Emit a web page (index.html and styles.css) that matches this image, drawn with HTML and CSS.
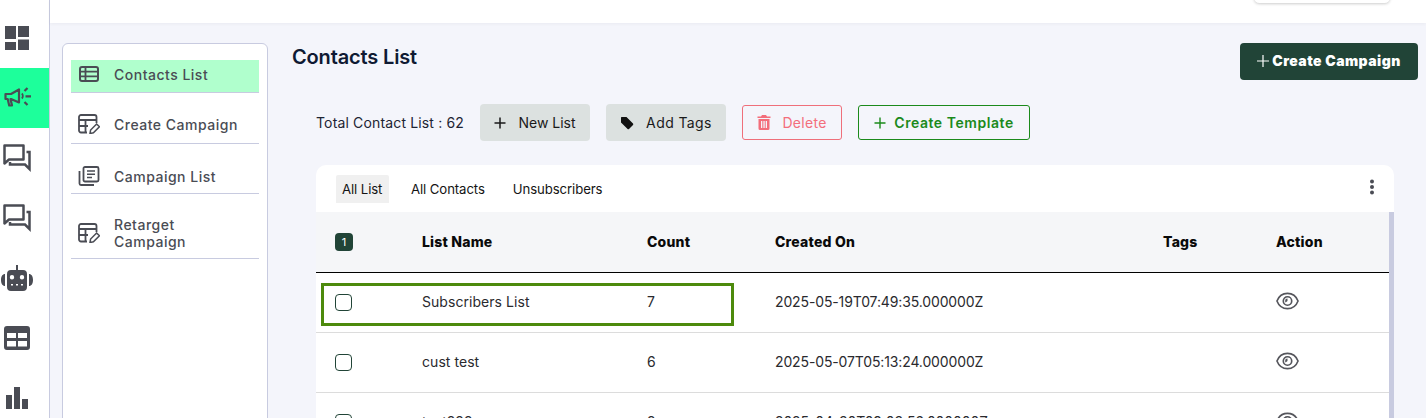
FILE: index.html
```html
<!DOCTYPE html>
<html lang="en">
<head>
<meta charset="utf-8">
<title>Contacts List</title>
<link rel="stylesheet" href="styles.css">
</head>
<body>
<div class="app">
  <nav class="rail">
    <a class="rail-item"><svg width="24" height="24" viewBox="0 0 24 24"><path d="M0 0h11v13H0zM13 0h11v11H13zM0 16h11v8H0zM13 13.500h11V24H13z"/></svg></a>
    <a class="rail-item is-active"><svg width="27" height="22" viewBox="0 0 27 22"><path d="M1.500 7h5.500l8-4.500v13L7 12H6.500l1.500 6.500H5.200L3.700 12H1.500z" stroke="currentColor" stroke-width="2.200" stroke-linejoin="round" fill="none"/><path d="M17.800 6.500a3.500 3.500 0 0 1 0 5" fill="none" stroke="currentColor" stroke-width="1.800"/><path d="M20.500 4l3-3M21.500 9.300h5.500M20.500 15l3 3" fill="none" stroke="currentColor" stroke-width="2.200"/></svg></a>
    <a class="rail-item"><svg width="28" height="28" viewBox="0 0 28 28"><path d="M1.500 1.500h19v14H6l-4.500 4z" fill="none" stroke="currentColor" stroke-width="2.500" stroke-linejoin="round"/><path d="M23.500 8h3v17L22 20.500H7v-2.500" fill="none" stroke="currentColor" stroke-width="2.500"/></svg></a>
    <a class="rail-item"><svg width="28" height="28" viewBox="0 0 28 28"><path d="M1.500 1.500h19v14H6l-4.500 4z" fill="none" stroke="currentColor" stroke-width="2.500" stroke-linejoin="round"/><path d="M23.500 8h3v17L22 20.500H7v-2.500" fill="none" stroke="currentColor" stroke-width="2.500"/></svg></a>
    <a class="rail-item"><svg width="34" height="26" viewBox="0 0 34 26"><path d="M16 0h2v5h-2z"/><path fill-rule="evenodd" d="M11 5h12a4 4 0 0 1 4 4v13a4 4 0 0 1-4 4H11a4 4 0 0 1-4-4V9a4 4 0 0 1 4-4zm1 5a2.200 2.200 0 1 0 0 4.400 2.200 2.200 0 0 0 0-4.400zm10 0a2.200 2.200 0 1 0 0 4.400 2.200 2.200 0 0 0 0-4.400zM11 19v1.500h2V19zm5 0v1.500h2V19zm5 0v1.500h2V19z"/><path d="M5 9v12c-2.500 0-4-2.200-4-6S2.500 9 5 9zM29 9v12c2.500 0 4-2.200 4-6S31.500 9 29 9z"/></svg></a>
    <a class="rail-item"><svg width="26" height="24" viewBox="0 0 26 24"><path fill-rule="evenodd" d="M3 0h20a3 3 0 0 1 3 3v18a3 3 0 0 1-3 3H3a3 3 0 0 1-3-3V3a3 3 0 0 1 3-3zm0 7v5h9V7zm11 0v5h9V7zM3 15v5.500h9V15zm11 0v5.500h9V15z"/></svg></a>
    <a class="rail-item"><svg width="22" height="22" viewBox="0 0 22 22"><path d="M0 8h6v14H0zM8 0h6v22H8zM16 12h6v10h-6z"/></svg></a>
  </nav>
  <div class="main">
    <header class="topbar"><div class="top-pill"></div></header>
    <div class="content">
      <aside class="side">
        <a class="side-item is-current"><svg class="side-icon" width="20" height="16" viewBox="0 0 20 16"><rect x="1" y="1" width="18" height="14" rx="2" fill="none" stroke="currentColor" stroke-width="2"/><path d="M1 5.700h18M1 10.300h18M6.500 1v14" stroke="currentColor" stroke-width="1.800"/></svg><span>Contacts List</span></a>
        <a class="side-item"><svg class="side-icon" width="22" height="20" viewBox="0 0 22 20"><path d="M9 18.500H3a2 2 0 0 1-2-2V3a2 2 0 0 1 2-2h13.500a2 2 0 0 1 2 2v6M1 6h17.500M1 12h9M7.500 6v12" fill="none" stroke="currentColor" stroke-width="1.800"/><path d="M12 19.500l.6-3.500 6-6 2.800 2.800-6 6z" fill="none" stroke="currentColor" stroke-width="1.500"/></svg><span>Create Campaign</span></a>
        <a class="side-item side-item-short"><svg class="side-icon" width="22" height="20" viewBox="0 0 22 20"><rect x="5.500" y="1" width="15" height="14.500" rx="1.500" fill="none" stroke="currentColor" stroke-width="1.800"/><path d="M1.500 5v12.500a1.500 1.500 0 0 0 1.500 1.500h13" fill="none" stroke="currentColor" stroke-width="1.800"/><path d="M9 5h8M9 8.200h8M9 11.500h5" stroke="currentColor" stroke-width="1.600"/></svg><span>Campaign List</span></a>
        <a class="side-item side-item-tall"><svg class="side-icon" width="22" height="20" viewBox="0 0 22 20"><path d="M9 18.500H3a2 2 0 0 1-2-2V3a2 2 0 0 1 2-2h13.500a2 2 0 0 1 2 2v6M1 6h17.500M1 12h9M7.500 6v12" fill="none" stroke="currentColor" stroke-width="1.800"/><path d="M12 19.500l.6-3.500 6-6 2.800 2.800-6 6z" fill="none" stroke="currentColor" stroke-width="1.500"/></svg><span>Retarget<br>Campaign</span></a>
      </aside>
      <section class="panel">
        <div class="panel-head">
          <h1>Contacts List</h1>
          <button class="btn-primary"><svg width="12" height="12" viewBox="0 0 12 12"><path d="M6 0v12M0 6h12" stroke="currentColor" stroke-width="1.200"/></svg>Create Campaign</button>
        </div>
        <div class="toolbar">
          <span class="total">Total Contact List : 62</span>
          <button class="btn btn-grey btn-new"><svg width="12" height="12" viewBox="0 0 12 12"><path d="M6 .5v11M.5 6h11" stroke="currentColor" stroke-width="1.500"/></svg>New List</button>
          <button class="btn btn-grey btn-tags"><svg width="14" height="14" viewBox="0 0 14 14"><path d="M1 1.500A.6.6 0 0 1 1.600 1H6.500l6.500 6.500a1 1 0 0 1 0 1.400L9 13a1 1 0 0 1-1.400 0L1 6.500z"/></svg>Add Tags</button>
          <button class="btn btn-delete"><svg width="14" height="15" viewBox="0 0 14 15"><path fill-rule="evenodd" d="M5 0h4l1 1.500h3.500V3H.5V1.500H4zM1.500 4h11v9.500A1.500 1.500 0 0 1 11 15H3a1.500 1.500 0 0 1-1.500-1.500zm2.500 2v7h1.300V6zm2.400 0v7h1.300V6zm2.300 0v7H10V6z"/></svg>Delete</button>
          <button class="btn btn-outline"><svg width="12" height="12" viewBox="0 0 12 12"><path d="M6 .5v11M.5 6h11" stroke="currentColor" stroke-width="1.400"/></svg>Create Template</button>
        </div>
        <div class="card">
          <div class="tabs">
            <a class="tab is-on">All List</a>
            <a class="tab">All Contacts</a>
            <a class="tab">Unsubscribers</a>
            <svg class="kebab" width="6" height="16" viewBox="0 0 6 16"><circle cx="3" cy="2.500" r="2"/><circle cx="3" cy="8" r="2"/><circle cx="3" cy="13.500" r="2"/></svg>
          </div>
          <div class="table-wrap">
            <table>
              <thead>
                <tr>
                  <th class="c-check"><span class="badge">1</span></th>
                  <th class="c-name">List Name</th>
                  <th class="c-count">Count</th>
                  <th class="c-date">Created On</th>
                  <th class="c-tags">Tags</th>
                  <th class="c-action">Action</th>
                </tr>
              </thead>
              <tbody>
                <tr>
                  <td><span class="box"></span></td><td>Subscribers List</td><td>7</td><td class="date">2025-05-19T07:49:35.000000Z</td><td></td>
                  <td><svg class="eye" width="23" height="18" viewBox="0 0 24 18"><path d="M12 1C7 1 2.800 4.300 1 9c1.800 4.700 6 8 11 8s9.200-3.300 11-8c-1.800-4.700-6-8-11-8z" fill="none" stroke="currentColor" stroke-width="1.700"/><circle cx="12" cy="9" r="4.400" fill="none" stroke="currentColor" stroke-width="1.700"/><path d="M12 6.500a2.500 2.500 0 0 0-2.500 2.500 2.500 2.500 0 0 0 .5 1.500L12 9z"/></svg></td>
                </tr>
                <tr>
                  <td><span class="box"></span></td><td>cust test</td><td>6</td><td class="date">2025-05-07T05:13:24.000000Z</td><td></td>
                  <td><svg class="eye" width="23" height="18" viewBox="0 0 24 18"><path d="M12 1C7 1 2.800 4.300 1 9c1.800 4.700 6 8 11 8s9.200-3.300 11-8c-1.800-4.700-6-8-11-8z" fill="none" stroke="currentColor" stroke-width="1.700"/><circle cx="12" cy="9" r="4.400" fill="none" stroke="currentColor" stroke-width="1.700"/><path d="M12 6.500a2.500 2.500 0 0 0-2.500 2.500 2.500 2.500 0 0 0 .5 1.500L12 9z"/></svg></td>
                </tr>
                <tr>
                  <td><span class="box"></span></td><td>test222</td><td>2</td><td class="date">2025-04-30T09:03:56.000000Z</td><td></td>
                  <td><svg class="eye" width="23" height="18" viewBox="0 0 24 18"><path d="M12 1C7 1 2.800 4.300 1 9c1.800 4.700 6 8 11 8s9.200-3.300 11-8c-1.800-4.700-6-8-11-8z" fill="none" stroke="currentColor" stroke-width="1.700"/><circle cx="12" cy="9" r="4.400" fill="none" stroke="currentColor" stroke-width="1.700"/></svg></td>
                </tr>
              </tbody>
            </table>
            <div class="highlight"></div>
          </div>
        </div>
      </section>
    </div>
  </div>
</div>
</body>
</html>
```
FILE: styles.css
```css
* { box-sizing: border-box; }
html, body { margin: 0; height: 418px; overflow: hidden; }
body { font-family: "Inter", "Liberation Sans", sans-serif; font-size: 14px; color: #1d2433; background: #f4f5fb; }
button { font: inherit; cursor: pointer; }
.app { display: flex; height: 418px; overflow: hidden; }

.rail { width: 50px; flex: none; background: #fff; border-right: 1px solid #c8cbe0; padding-top: 8px; display: flex; flex-direction: column; color: #4a4c54; fill: #4a4c54; }
.rail-item { height: 60px; padding-right: 15px; display: flex; align-items: center; justify-content: center; flex: none; }
.rail-item.is-active { background: #1dff9b; }

.main { flex: 1; min-width: 0; display: flex; flex-direction: column; }
.topbar { height: 23px; flex: none; background: #fff; box-shadow: 0 1px 3px rgba(60,60,90,.06); position: relative; }
.top-pill { position: absolute; right: 36px; top: -8px; width: 136px; height: 11px; background: #fff; border-radius: 6px; box-shadow: 0 1px 3px rgba(0,0,0,.2); }

.content { flex: 1; display: flex; padding: 20px 8px 0 12px; gap: 24px; min-height: 0; }
.side { width: 206px; flex: none; height: 500px; background: #fff; border: 1px solid #c8cbe0; border-radius: 6px; padding: 16px 8px; display: flex; flex-direction: column; gap: 16px; }
.side-item { display: flex; align-items: center; gap: 14px; padding: 0 7px 4px; height: 35px; flex: none; border-bottom: 1px solid #c8cbe0; color: #4a4c54; font-size: 14px; font-weight: 500; letter-spacing: .5px; line-height: 17px; }
.side-item-short { height: 34px; padding-bottom: 1px; }
.side-item-tall { height: 49px; padding-bottom: 2px; }
.side-item.is-current { height: 33px; background: #b0ffcd; }
.side-item.is-current .side-icon { margin-left: 1px; margin-right: 1px; }
.side-icon { flex: none; }

.panel { flex: 1; min-width: 0; display: flex; flex-direction: column; }
.panel-head { display: flex; justify-content: space-between; align-items: flex-start; height: 61px; flex: none; }
h1 { margin: 2px 0 0; font-size: 20px; line-height: 24px; font-weight: 600; color: #0f1a33; letter-spacing: -.15px; }
.btn-primary { width: 178px; height: 37px; background: #214437; color: #fff; border: 0; border-radius: 4px; font-size: 14px; line-height: 16px; font-weight: 900; letter-spacing: .45px; display: flex; align-items: center; justify-content: center; gap: 3px; padding: 0 0 1px; }

.toolbar { margin-left: 24px; height: 37px; display: flex; align-items: center; flex: none; gap: 16px; }
.total { width: 148px; letter-spacing: .15px; font-size: 14px; white-space: nowrap; flex: none; }
.btn { height: 37px; display: flex; align-items: center; justify-content: center; border-radius: 4px; border: 1px solid transparent; padding: 0; font-size: 14px; flex: none; }
.btn-grey { background: #dce1e0; color: #1a1a1a; }
.btn-new { width: 110px; gap: 12px; }
.btn-tags { width: 120px; gap: 12px; fill: #111; letter-spacing: .4px; }
.btn-delete { width: 100px; height: 35px; gap: 11px; background: transparent; border-color: #ef6f7a; color: #f36e7b; fill: #f36e7b; border-radius: 3px; letter-spacing: .3px; }
.btn-outline { width: 172px; height: 35px; gap: 8px; background: transparent; border-color: #1b8a1b; color: #1b8a1b; font-weight: 600; letter-spacing: .55px; border-radius: 3px; }

.card { margin: 24px 0 0 24px; width: 1078px; background: #fff; border-radius: 10px 10px 0 0; flex: 1; min-height: 0; display: flex; flex-direction: column; }
.tabs { height: 47px; flex: none; padding: 10px 20px 0; display: flex; align-items: flex-start; gap: 16px; position: relative; }
.tab { height: 28px; padding: 0 6px; line-height: 28px; font-size: 13.2px; color: #141414; letter-spacing: -.1px; white-space: nowrap; }
.tab.is-on { flex: 0 0 53px; background: #f0f0f0; border-radius: 2px 2px 0 0; }
.kebab { position: absolute; right: 19px; top: 14px; fill: #4a4c54; }

.table-wrap { position: relative; flex: 1; min-height: 0; border-right: 5px solid #c8cbe0; overflow: hidden; }
table { width: 100%; border-collapse: collapse; table-layout: fixed; }
th { height: 60px; background: #f5f6f8; text-align: left; padding: 0; font-size: 14px; font-weight: 800; color: #0a0a0a; border-bottom: 1px solid #000; letter-spacing: .2px; }
td { height: 60px; padding: 0 0 2px; font-size: 14px; color: #2a2a2e; border-bottom: 1px solid #dcdcdc; letter-spacing: .05px; }
td.date { letter-spacing: -.13px; }
td:first-child { padding-bottom: 0; }
td:first-child, th:first-child { padding-left: 19px; }
.c-check { width: 106px; }
.c-name { width: 225px; }
.c-count { width: 128px; }
.c-date { width: 388px; }
.c-tags { width: 113px; }
.badge { display: inline-block; width: 18px; height: 18px; border-radius: 4px; background: #214437; color: #fff; font-size: 11px; font-weight: 400; line-height: 18px; text-align: center; vertical-align: middle; }
.box { display: block; width: 17px; height: 17px; border: 1px solid #214437; border-radius: 4px; background: #fff; }
.eye { display: block; color: #55565c; fill: #55565c; }
.highlight { position: absolute; left: 5px; top: 71px; width: 413px; height: 43px; border: 3px solid #4d8a0c; pointer-events: none; }
```
